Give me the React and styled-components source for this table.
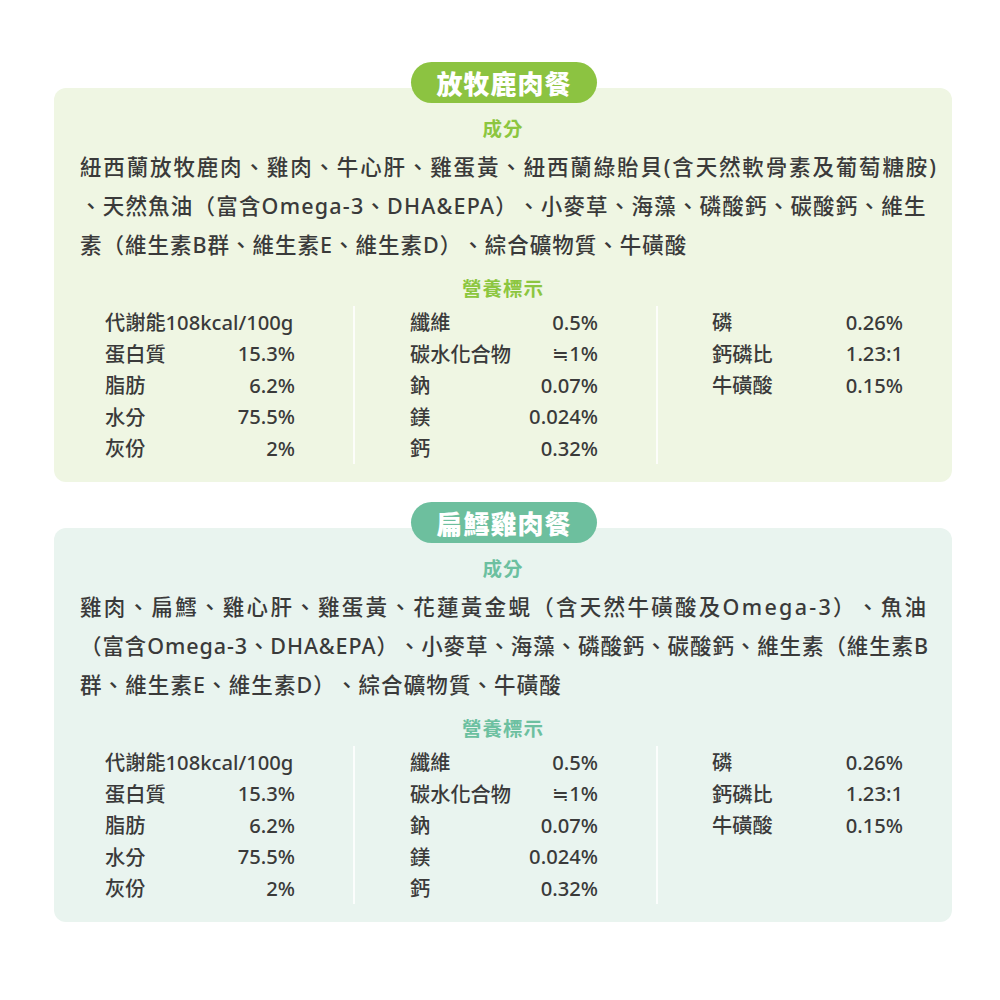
import React from "react";
import styled, { createGlobalStyle } from "styled-components";

const Global = createGlobalStyle`
  html, body { margin: 0; padding: 0; background: #ffffff; }
  body {
    font-family: "Noto Sans", "Noto Sans CJK TC", sans-serif;
    color: #3a3a3a;
    text-spacing-trim: space-all;
  }
`;

const Page = styled.div`
  width: 1000px;
  height: 1000px;
  box-sizing: border-box;
  padding: 88px 48px 0 54px;
  display: flex;
  flex-direction: column;
  gap: 46px;
`;

const Card = styled.section`
  background: ${(p) => p.$bg};
  border-radius: 12px;
  height: 394px;
  box-sizing: border-box;
  display: flex;
  flex-direction: column;
`;

const Pill = styled.div`
  align-self: center;
  margin-top: -26px;
  width: 186px;
  height: 41px;
  border-radius: 21px;
  background: ${(p) => p.$color};
  color: #ffffff;
  font-family: "Noto Sans CJK TC", sans-serif;
  font-weight: 900;
  font-size: 26px;
  letter-spacing: 1px;
  display: flex;
  align-items: center;
  justify-content: center;
  transform: translateX(1px);
`;

const Heading = styled.h3`
  margin: ${(p) => p.$mt}px 0 0;
  text-align: center;
  font-family: "Noto Sans CJK TC", sans-serif;
  font-weight: 700;
  font-size: 19.5px;
  line-height: 30px;
  color: ${(p) => p.$color};
  letter-spacing: 1px;
`;

const Ingredients = styled.div`
  margin-top: 4px;
  padding: 0 20px 0 26px;
  font-family: "Noto Sans", "Noto Sans CJK TC", sans-serif;
  font-weight: 500;
  font-size: 21.5px;
  line-height: 39px;
  color: #3a3a3a;
  white-space: nowrap;
  height: 117px;
`;

const Line = styled.div`
  letter-spacing: ${(p) => p.$ls}px;
`;

const Table = styled.div`
  margin-top: 3px;
  display: grid;
  grid-template-columns: 299px 303px 1fr;
`;

const Col = styled.div`
  padding: 0 ${(p) => p.$pr}px 0 ${(p) => p.$pl}px;
  border-left: ${(p) => (p.$divider ? "2px solid rgba(255,255,255,0.8)" : "none")};
  display: flex;
  flex-direction: column;
  min-height: 158px;
`;

const Row = styled.div`
  display: flex;
  justify-content: space-between;
  align-items: center;
  height: 31.5px;
  font-family: "Noto Sans", "Noto Sans CJK TC", sans-serif;
  font-weight: 500;
  font-size: 20.2px;
  color: #3a3a3a;
  white-space: nowrap;
`;

const Label = styled.span``;
const Value = styled.span``;

const tableData = [
  {
    pl: 51,
    pr: 58,
    rows: [
      ["代謝能108kcal/100g", ""],
      ["蛋白質", "15.3%"],
      ["脂肪", "6.2%"],
      ["水分", "75.5%"],
      ["灰份", "2%"],
    ],
  },
  {
    pl: 55,
    pr: 58,
    divider: true,
    rows: [
      ["纖維", "0.5%"],
      ["碳水化合物", "≒1%"],
      ["鈉", "0.07%"],
      ["鎂", "0.024%"],
      ["鈣", "0.32%"],
    ],
  },
  {
    pl: 54,
    pr: 49,
    divider: true,
    rows: [
      ["磷", "0.26%"],
      ["鈣磷比", "1.23:1"],
      ["牛磺酸", "0.15%"],
    ],
  },
];

const products = [
  {
    name: "放牧鹿肉餐",
    bg: "#eff6e3",
    pill: "#8cc341",
    accent: "#8cc63f",
    lines: [
      ["紐西蘭放牧鹿肉、雞肉、牛心肝、雞蛋黃、紐西蘭綠貽貝(含天然軟骨素及葡萄糖胺)", 1.85],
      ["、天然魚油（富含Omega-3、DHA&EPA）、小麥草、海藻、磷酸鈣、碳酸鈣、維生", 1.2],
      ["素（維生素B群、維生素E、維生素D）、綜合礦物質、牛磺酸", 1.0],
    ],
  },
  {
    name: "扁鱈雞肉餐",
    bg: "#e9f4ef",
    pill: "#6dbf9e",
    accent: "#6cc0a0",
    lines: [
      ["雞肉、扁鱈、雞心肝、雞蛋黃、花蓮黃金蜆（含天然牛磺酸及Omega-3）、魚油", 2.3],
      ["（富含Omega-3、DHA&EPA）、小麥草、海藻、磷酸鈣、碳酸鈣、維生素（維生素B", 0.9],
      ["群、維生素E、維生素D）、綜合礦物質、牛磺酸", 1.1],
    ],
  },
];

function ProductCard({ p }) {
  return (
    <Card $bg={p.bg}>
      <Pill $color={p.pill}>{p.name}</Pill>
      <Heading $mt={10} $color={p.accent}>成分</Heading>
      <Ingredients>
        {p.lines.map(([l, ls], i) => (
          <Line key={i} $ls={ls}>{l}</Line>
        ))}
      </Ingredients>
      <Heading $mt={9} $color={p.accent}>營養標示</Heading>
      <Table>
        {tableData.map((c, i) => (
          <Col key={i} $pl={c.pl} $pr={c.pr} $divider={c.divider}>
            {c.rows.map(([l, v], j) => (
              <Row key={j}>
                <Label>{l}</Label>
                <Value>{v}</Value>
              </Row>
            ))}
          </Col>
        ))}
      </Table>
    </Card>
  );
}

export default function App() {
  return (
    <>
      <Global />
      <Page>
        {products.map((p) => (
          <ProductCard key={p.name} p={p} />
        ))}
      </Page>
    </>
  );
}
